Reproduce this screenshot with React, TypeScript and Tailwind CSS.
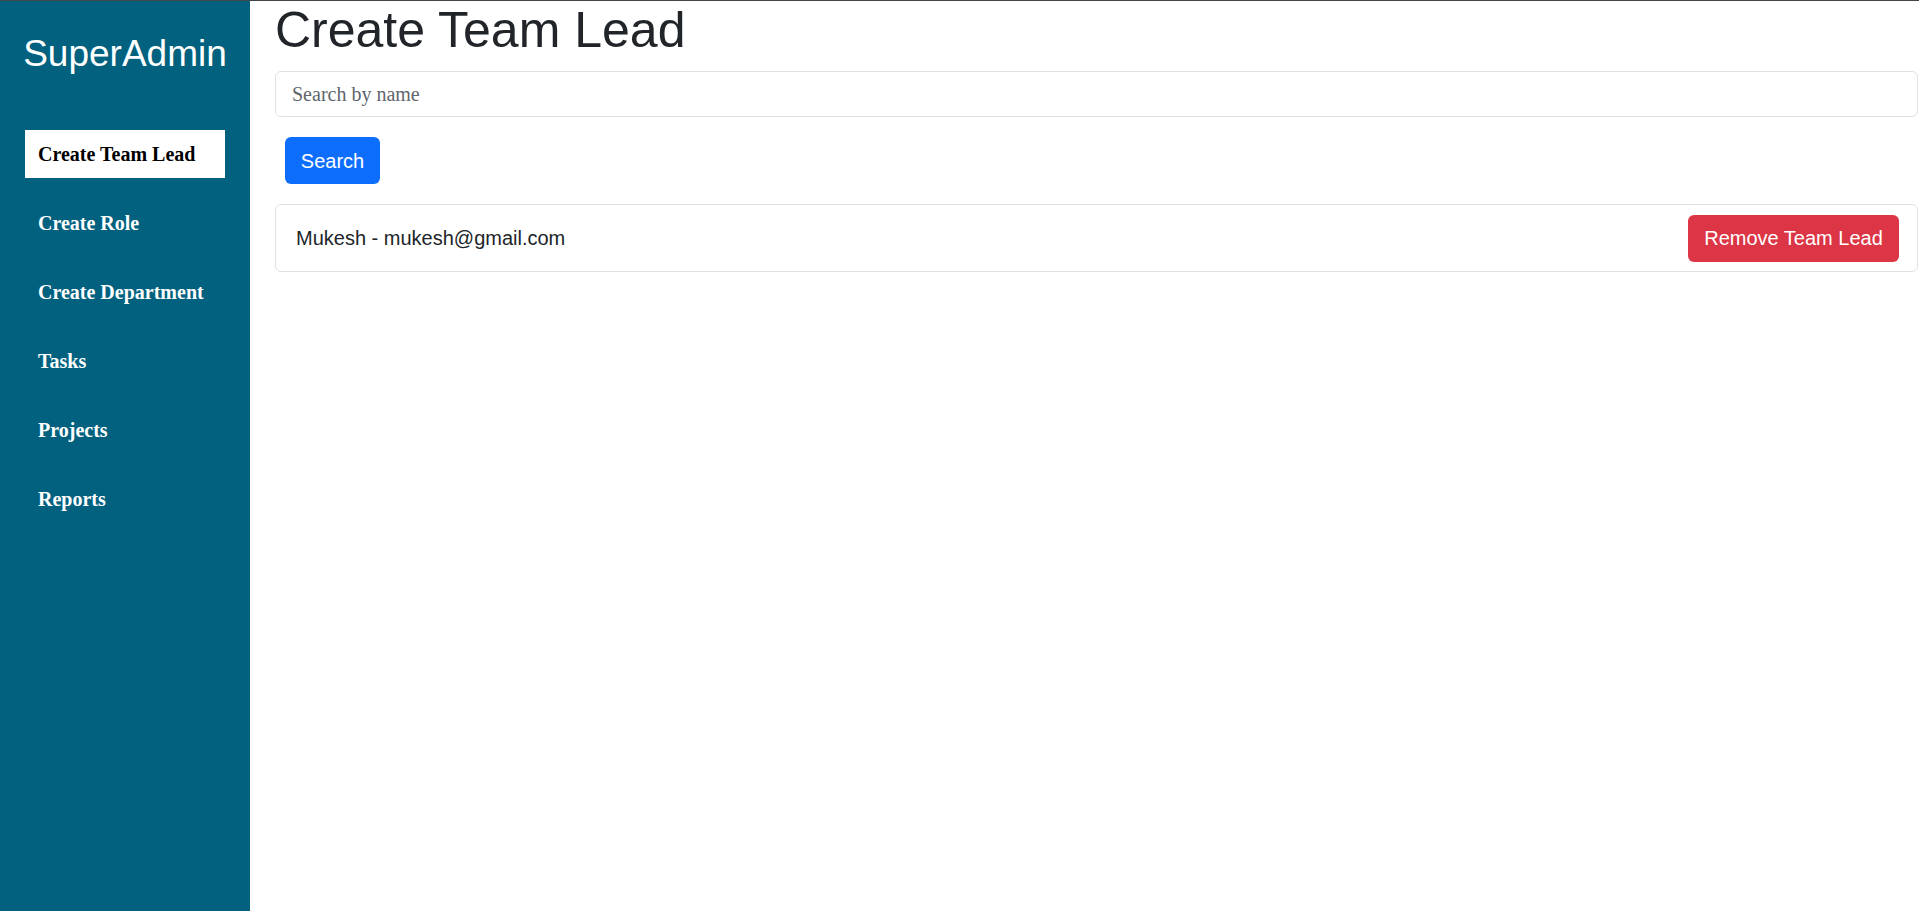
import React from "react";

const navItems = [
  "Create Team Lead",
  "Create Role",
  "Create Department",
  "Tasks",
  "Projects",
  "Reports",
];

export default function App() {
  return (
    <div className="flex h-[911px] w-full flex-col overflow-hidden border-t border-[#41464b] bg-white">
      <div className="flex flex-1">
        <aside className="flex w-[250px] shrink-0 flex-col bg-[#01617f] pt-[32px]">
          <div
            className="text-center text-[37px] leading-[42px] text-white"
            style={{ fontFamily: '"Liberation Sans", Arial, sans-serif' }}
          >
            SuperAdmin
          </div>
          <nav
            className="mt-[55px] flex flex-col gap-[21px] px-[25px]"
            style={{ fontFamily: '"Liberation Serif", "Times New Roman", serif' }}
          >
            {navItems.map((item, i) => (
              <div
                key={item}
                className={
                  i === 0
                    ? "flex h-[48px] items-center bg-white pl-[13px] text-[20px] font-bold text-black"
                    : "flex h-[48px] items-center pl-[13px] text-[20px] font-bold text-white"
                }
              >
                {item}
              </div>
            ))}
          </nav>
        </aside>
        <main
          className="flex flex-1 flex-col pl-[25px] pr-px"
          style={{ fontFamily: '"Liberation Sans", Arial, sans-serif' }}
        >
          <h1 className="text-[50px] font-normal leading-[58px] text-[#212529]">
            Create Team Lead
          </h1>
          <div className="mt-[12px] flex h-[46px] items-center rounded-[6px] border border-[#dee2e6] px-[16px]">
            <span
              className="text-[20px] text-[#5f666d]"
              style={{ fontFamily: '"Liberation Serif", "Times New Roman", serif' }}
            >
              Search by name
            </span>
          </div>
          <div className="mt-[20px] flex">
            <button className="ml-[10px] flex h-[47px] w-[95px] items-center justify-center rounded-[6px] bg-[#0d6efd] text-[20px] text-white">
              Search
            </button>
          </div>
          <div className="mt-[20px] flex h-[68px] items-center justify-between rounded-[6px] border border-[#dee2e6] pl-[20px] pr-[18px]">
            <span className="text-[20px] text-[#212529]">Mukesh - mukesh@gmail.com</span>
            <button className="flex h-[47px] w-[211px] items-center justify-center rounded-[6px] bg-[#dc3545] text-[20px] text-white">
              Remove Team Lead
            </button>
          </div>
        </main>
      </div>
    </div>
  );
}
